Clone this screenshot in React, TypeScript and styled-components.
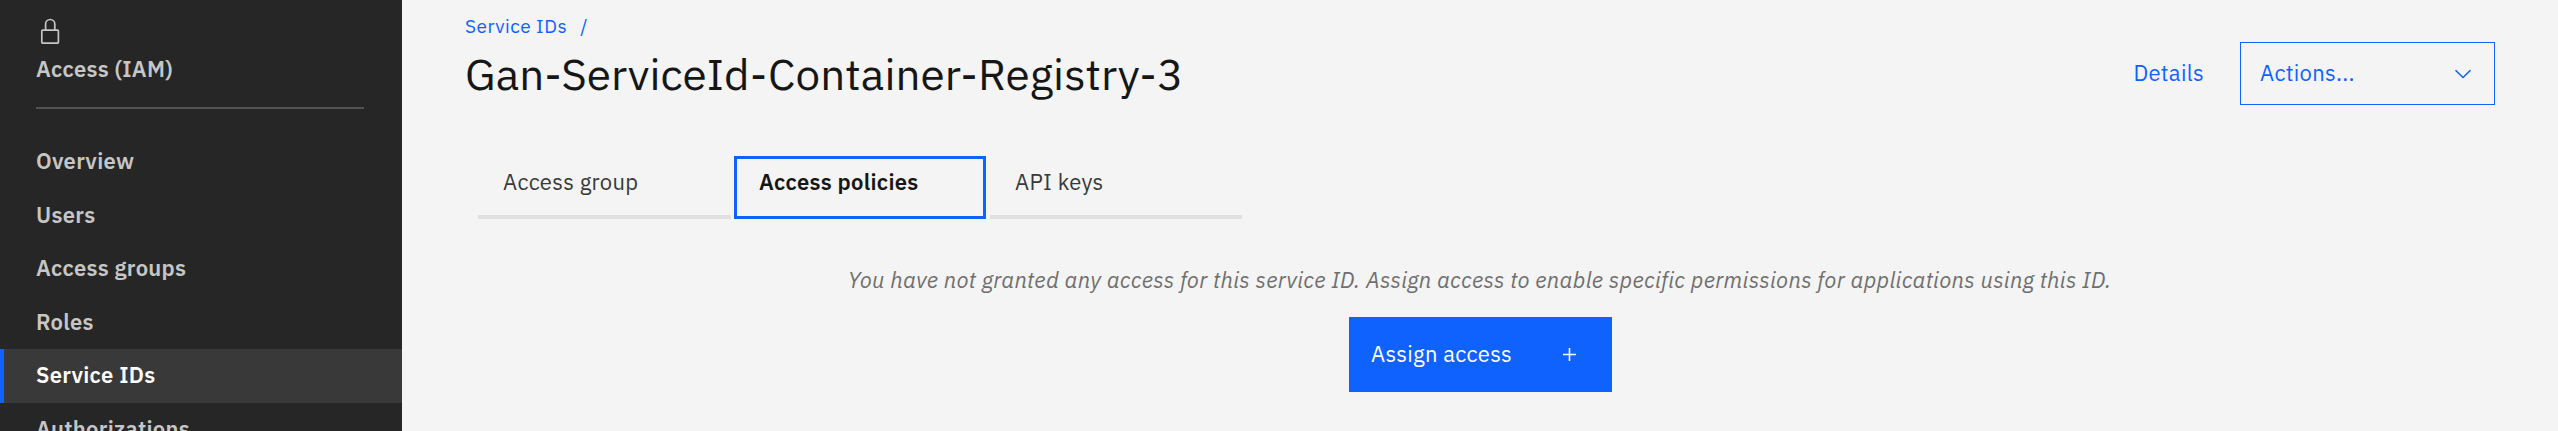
import React from "react";
import styled, { createGlobalStyle } from "styled-components";

const GlobalStyle = createGlobalStyle`
  * { box-sizing: border-box; }
  html, body { margin: 0; padding: 0; background: #f4f4f4; }
  body {
    height: 431px;
    overflow: hidden;
    font-family: "IBM Plex Sans", Roboto, "Noto Sans", sans-serif;
    font-size: 22px;
    line-height: 29px;
    letter-spacing: 0.3px;
    color: #161616;
  }
  button { font: inherit; letter-spacing: inherit; border: 0; margin: 0; cursor: pointer; }
  a { text-decoration: none; }
`;

const Page = styled.div`
  display: flex;
  width: 2558px;
  height: 431px;
  overflow: hidden;
`;

const Sidebar = styled.aside`
  flex: none;
  width: 402px;
  background: #262626;
  color: #c6c6c6;
  font-weight: 600;
`;

const SidebarHeader = styled.header`
  height: 109px;
  margin: 0 38px 0 36px;
  padding-top: 18px;
  border-bottom: 2px solid #525252;

  svg { display: block; margin-left: 4px; }
`;

const SidebarTitle = styled.div`
  margin-top: 9px;
  white-space: nowrap;
`;

const Nav = styled.nav`
  display: flex;
  flex-direction: column;
  padding-top: 26px;
`;

const NavItem = styled.a<{ $active?: boolean }>`
  display: flex;
  align-items: center;
  flex: none;
  height: 53.5px;
  padding: 0 0 2px 32px;
  border-left: 4px solid ${(p) => (p.$active ? "#0f62fe" : "transparent")};
  background: ${(p) => (p.$active ? "#393939" : "transparent")};
  color: ${(p) => (p.$active ? "#ffffff" : "#c6c6c6")};
`;

const Main = styled.main`
  flex: 1;
  min-width: 0;
  padding: 12px 63px 0 63px;
`;

const TopBar = styled.div`
  display: flex;
  justify-content: space-between;
  height: 144px;
`;

const Breadcrumb = styled.div`
  display: flex;
  gap: 13px;
  font-size: 19px;
  line-height: 28px;
  letter-spacing: 0.5px;
  color: #0f62fe;
`;

const Title = styled.h1`
  margin: 5px 0 0;
  font-size: 44px;
  line-height: 57px;
  font-weight: 400;
  letter-spacing: 0.1px;
  white-space: nowrap;
`;

const Actions = styled.div`
  display: flex;
  align-items: center;
  height: 63px;
  margin-top: 30px;
`;

const DetailsLink = styled.a`
  margin-right: 36px;
  padding-bottom: 2px;
  color: #0f62fe;
`;

const ActionsButton = styled.button`
  display: flex;
  align-items: center;
  justify-content: space-between;
  width: 255px;
  height: 63px;
  padding: 0 22px 2px 19px;
  border: 1px solid #0f62fe;
  background: transparent;
  color: #0f62fe;

  svg { margin-top: 2px; }
`;

const Tabs = styled.div`
  display: flex;
  height: 63px;
  margin-left: 13px;
`;

const Tab = styled.button<{ $active?: boolean }>`
  display: flex;
  align-items: flex-start;
  width: 253px;
  height: 63px;
  margin-right: ${(p) => (p.$active ? "4px" : "3px")};
  padding: ${(p) => (p.$active ? "8px 0 0 22px" : "11px 0 0 25px")};
  border: ${(p) => (p.$active ? "3px solid #0f62fe" : "0")};
  border-bottom: ${(p) => (p.$active ? "3px solid #0f62fe" : "4px solid #e0e0e0")};
  background: transparent;
  color: ${(p) => (p.$active ? "#161616" : "#393939")};
  font-weight: ${(p) => (p.$active ? 600 : 400)};

  &:not(:first-child) { width: 252px; }
`;

const Empty = styled.section`
  display: flex;
  flex-direction: column;
  align-items: center;
  padding: 46px 0 0 1px;
`;

const EmptyText = styled.p`
  margin: 0;
  margin-right: 2px;
  font-style: italic;
  color: #6f6f6f;
  white-space: nowrap;
  letter-spacing: 0.31px;
`;

const AssignButton = styled.button`
  display: flex;
  align-items: center;
  justify-content: space-between;
  width: 263px;
  height: 75px;
  margin-top: 23px;
  padding: 0 36px 2px 22px;
  background: #0f62fe;
  color: #ffffff;

  svg { margin-top: 2px; }
`;

const navItems = [
  { label: "Overview" },
  { label: "Users" },
  { label: "Access groups" },
  { label: "Roles" },
  { label: "Service IDs", active: true },
  { label: "Authorizations" },
];

const LockIcon = () => (
  <svg width="20" height="27" viewBox="0 0 20 27" fill="none" stroke="#c6c6c6" strokeWidth="1.7">
    <rect x="1.8" y="12.2" width="16.6" height="12.9" rx="0.8" />
    <path d="M5.6 12V6.1a4.6 4.6 0 0 1 9.2 0V12" />
  </svg>
);

const ChevronIcon = () => (
  <svg width="18" height="10" viewBox="0 0 18 10" fill="none" stroke="currentColor" strokeWidth="1.6">
    <path d="M1.5 1.2 9 8.5l7.5-7.3" />
  </svg>
);

const PlusIcon = () => (
  <svg width="13" height="13" viewBox="0 0 13 13" stroke="currentColor" strokeWidth="1.6">
    <path d="M6.5 0v13M0 6.5h13" />
  </svg>
);

export default function App() {
  return (
    <>
      <GlobalStyle />
      <Page>
        <Sidebar>
          <SidebarHeader>
            <LockIcon />
            <SidebarTitle>Access (IAM)</SidebarTitle>
          </SidebarHeader>
          <Nav>
            {navItems.map((item) => (
              <NavItem key={item.label} $active={item.active}>
                {item.label}
              </NavItem>
            ))}
          </Nav>
        </Sidebar>
        <Main>
          <TopBar>
            <div>
              <Breadcrumb>
                <span>Service IDs</span>
                <span>/</span>
              </Breadcrumb>
              <Title>Gan-ServiceId-Container-Registry-3</Title>
            </div>
            <Actions>
              <DetailsLink>Details</DetailsLink>
              <ActionsButton>
                Actions...
                <ChevronIcon />
              </ActionsButton>
            </Actions>
          </TopBar>
          <Tabs>
            <Tab>Access group</Tab>
            <Tab $active>Access policies</Tab>
            <Tab>API keys</Tab>
          </Tabs>
          <Empty>
            <EmptyText>
              You have not granted any access for this service ID. Assign access to enable specific permissions for
              applications using this ID.
            </EmptyText>
            <AssignButton>
              Assign access
              <PlusIcon />
            </AssignButton>
          </Empty>
        </Main>
      </Page>
    </>
  );
}
